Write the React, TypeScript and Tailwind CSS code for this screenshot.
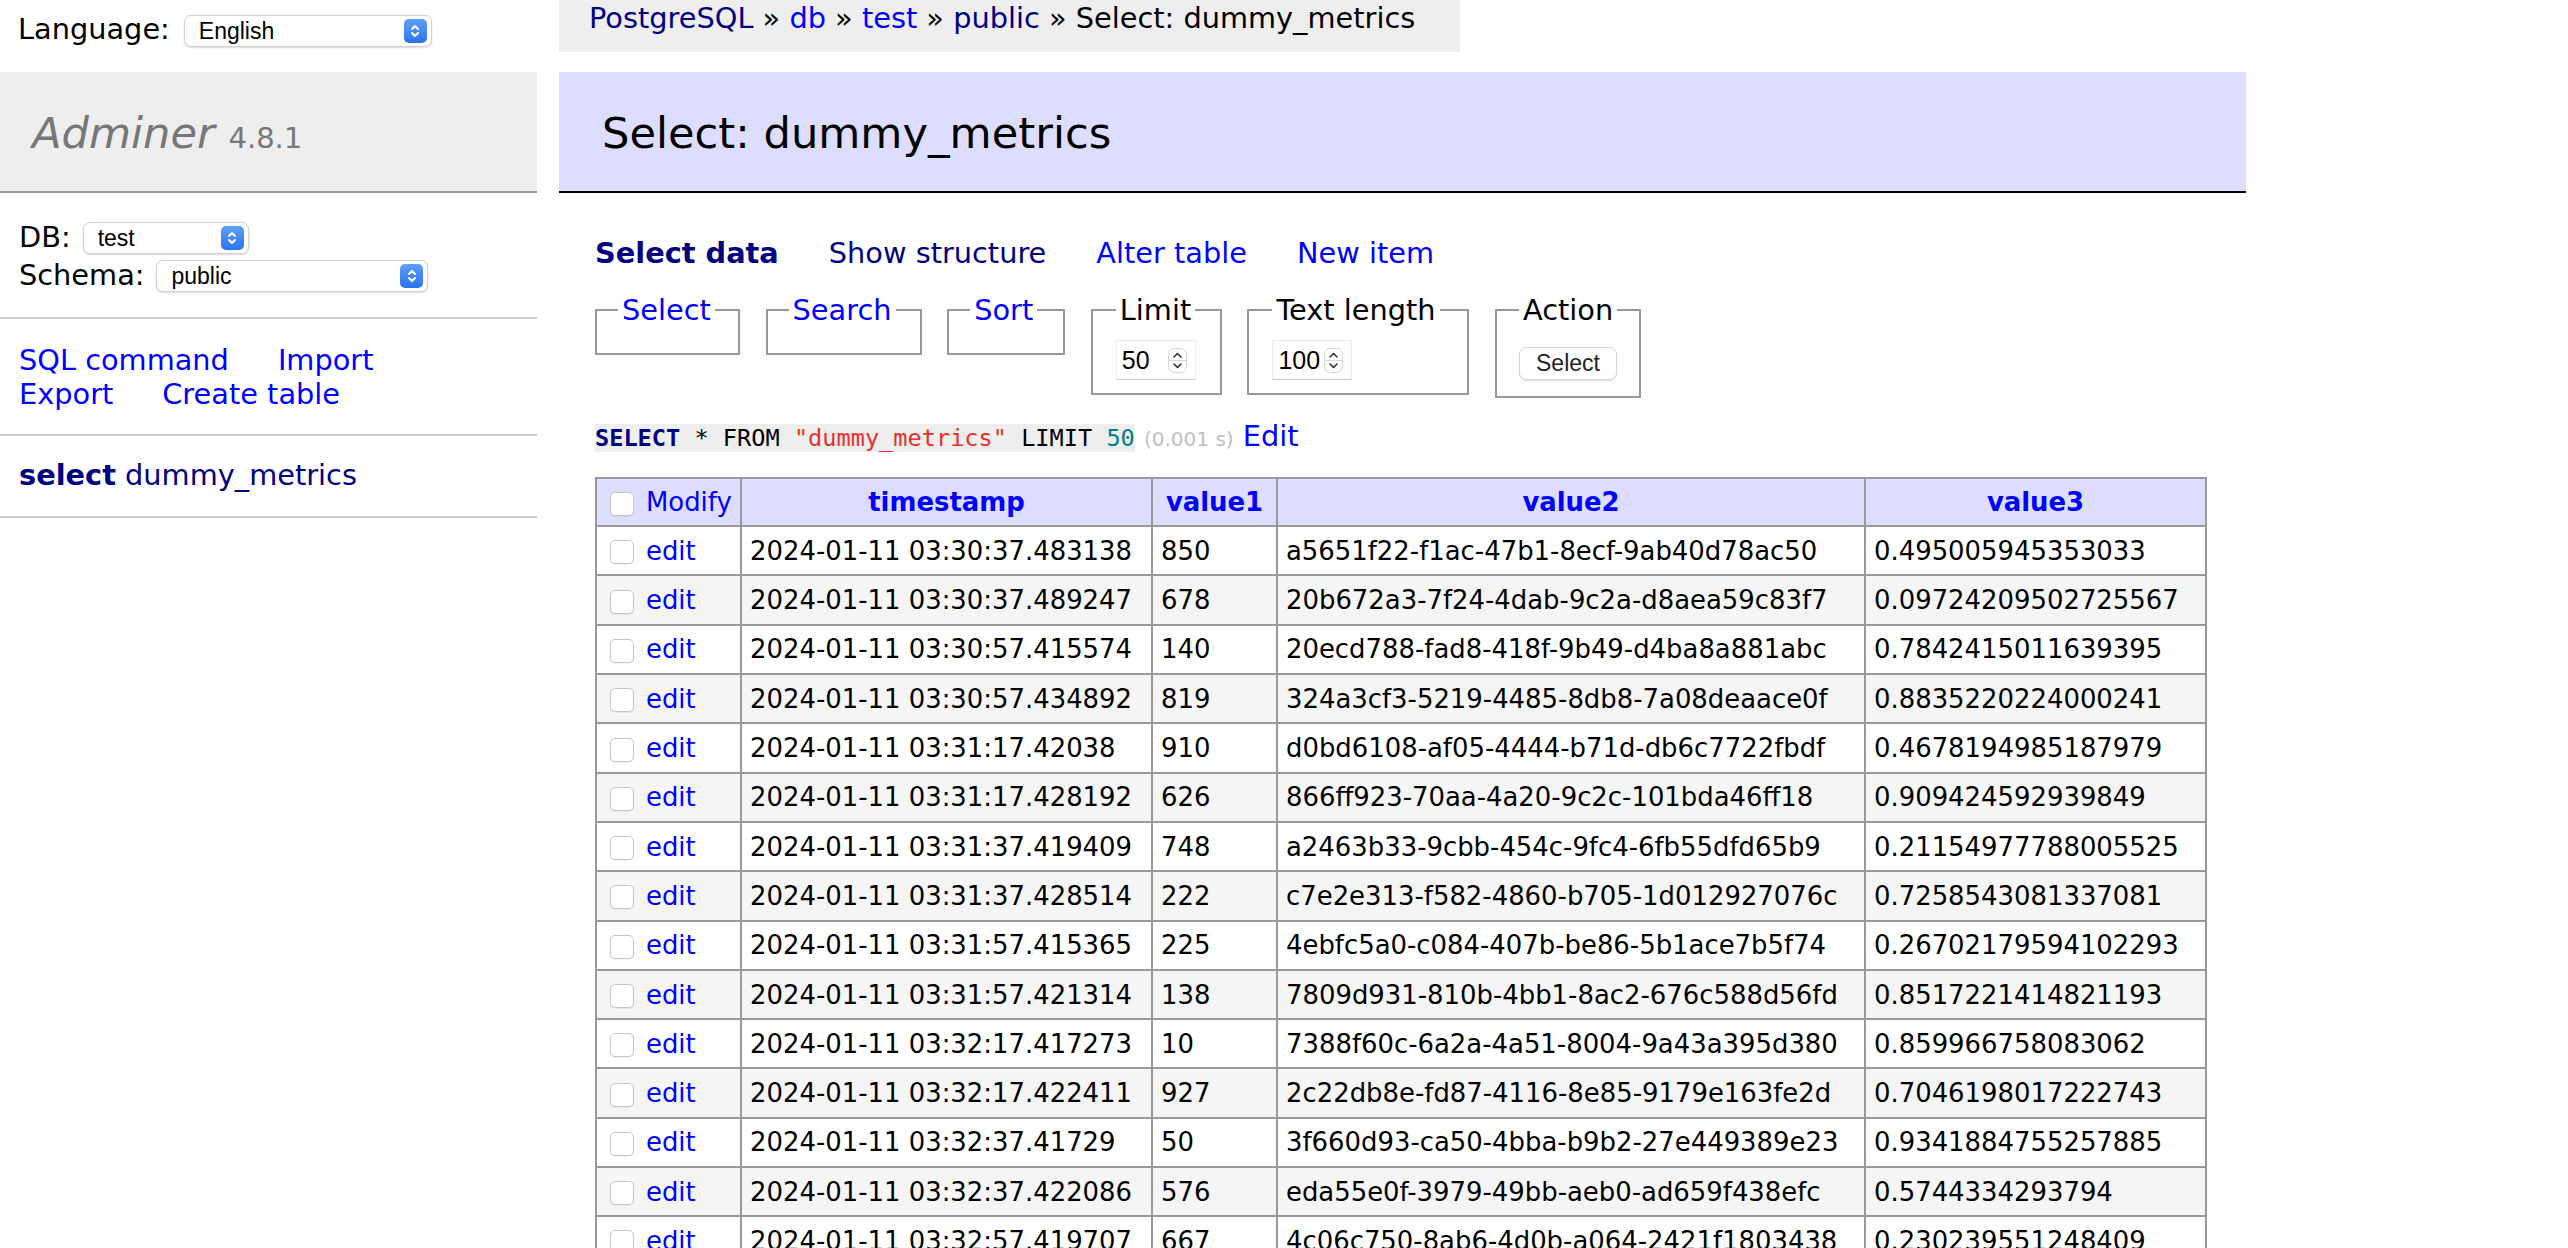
import React from 'react';

const rows = [
  ['2024-01-11 03:30:37.483138', '850', 'a5651f22-f1ac-47b1-8ecf-9ab40d78ac50', '0.495005945353033'],
  ['2024-01-11 03:30:37.489247', '678', '20b672a3-7f24-4dab-9c2a-d8aea59c83f7', '0.09724209502725567'],
  ['2024-01-11 03:30:57.415574', '140', '20ecd788-fad8-418f-9b49-d4ba8a881abc', '0.7842415011639395'],
  ['2024-01-11 03:30:57.434892', '819', '324a3cf3-5219-4485-8db8-7a08deaace0f', '0.8835220224000241'],
  ['2024-01-11 03:31:17.42038', '910', 'd0bd6108-af05-4444-b71d-db6c7722fbdf', '0.4678194985187979'],
  ['2024-01-11 03:31:17.428192', '626', '866ff923-70aa-4a20-9c2c-101bda46ff18', '0.909424592939849'],
  ['2024-01-11 03:31:37.419409', '748', 'a2463b33-9cbb-454c-9fc4-6fb55dfd65b9', '0.21154977788005525'],
  ['2024-01-11 03:31:37.428514', '222', 'c7e2e313-f582-4860-b705-1d012927076c', '0.7258543081337081'],
  ['2024-01-11 03:31:57.415365', '225', '4ebfc5a0-c084-407b-be86-5b1ace7b5f74', '0.26702179594102293'],
  ['2024-01-11 03:31:57.421314', '138', '7809d931-810b-4bb1-8ac2-676c588d56fd', '0.8517221414821193'],
  ['2024-01-11 03:32:17.417273', '10', '7388f60c-6a2a-4a51-8004-9a43a395d380', '0.859966758083062'],
  ['2024-01-11 03:32:17.422411', '927', '2c22db8e-fd87-4116-8e85-9179e163fe2d', '0.7046198017222743'],
  ['2024-01-11 03:32:37.41729', '50', '3f660d93-ca50-4bba-b9b2-27e449389e23', '0.9341884755257885'],
  ['2024-01-11 03:32:37.422086', '576', 'eda55e0f-3979-49bb-aeb0-ad659f438efc', '0.5744334293794'],
  ['2024-01-11 03:32:57.419707', '667', '4c06c750-8ab6-4d0b-a064-2421f1803438', '0.230239551248409'],
];

function SelectBox({ value, className }: { value: string; className: string }) {
  return (
    <div className={`flex h-[32px] items-center justify-between rounded-[7px] border border-[#d2d2d2] bg-white pl-[14px] pr-[4px] shadow-[0_1px_2px_rgba(0,0,0,0.15)] ${className}`}>
      <span className="font-['Liberation_Sans',sans-serif] text-[23px] leading-none text-black">{value}</span>
      <span className="flex h-[24px] w-[23px] items-center justify-center rounded-[5px] bg-linear-to-b from-[#5e9ff9] to-[#2c72ef]">
        <svg width="12" height="18" viewBox="0 0 12 18" fill="none" stroke="white" strokeWidth="2" strokeLinecap="round" strokeLinejoin="round">
          <path d="M3 7l3-3 3 3M3 11l3 3 3-3" />
        </svg>
      </span>
    </div>
  );
}

function NumberBox({ value }: { value: string }) {
  return (
    <div className="flex h-[40px] w-[80px] items-center justify-between border border-[#ececec] border-b-[#c9c9c9] bg-white pl-[5px] pr-[8px]">
      <span className="font-['Liberation_Sans',sans-serif] text-[25px] leading-none text-black">{value}</span>
      <svg width="19" height="25" viewBox="0 0 19 25" fill="none">
        <rect x="0.5" y="0.5" width="18" height="24" rx="6" fill="#fff" stroke="#d3d3d3" />
        <line x1="1" y1="12.5" x2="18" y2="12.5" stroke="#dcdcdc" />
        <path d="M6 9l3.5-3.5L13 9" stroke="#333" strokeWidth="1.6" strokeLinecap="round" strokeLinejoin="round" />
        <path d="M6 16l3.5 3.5L13 16" stroke="#333" strokeWidth="1.6" strokeLinecap="round" strokeLinejoin="round" />
      </svg>
    </div>
  );
}

function Checkbox() {
  return <span className="ml-[5px] mr-[12px] inline-block h-[24px] w-[24px] rounded-[5px] border border-[#c6c6c6] bg-white align-middle shadow-[0_1px_1px_rgba(0,0,0,0.06)]" />;
}

const filters = [
  { name: 'Select', width: 'w-[145px]' },
  { name: 'Search', width: 'w-[156px]' },
  { name: 'Sort', width: 'w-[118px]' },
];

export default function App() {
  const cell = 'border-2 border-[#999] px-[8px] py-0 whitespace-nowrap';
  const box = 'border-2 border-[#999] pb-[13px] pt-[12px]';

  return (
    <div className="flex min-h-screen w-[2568px] bg-white font-['DejaVu_Sans',Verdana,sans-serif] text-[28.8px] text-black">
      <aside className="w-[537px] shrink-0">
        <div className="flex h-[72px] items-start gap-[14px] pl-[18px] pt-[15px]">
          <span className="leading-[28px]">Language:</span>
          <SelectBox value="English" className="w-[248px]" />
        </div>

        <h1 className="h-[121px] border-b-2 border-[#999] bg-[#eee] pl-[32px] pt-[34px] text-[43.2px] font-normal leading-[54px] text-[#777]">
          <span className="italic">Adminer</span> <span className="text-[29px]">4.8.1</span>
        </h1>

        <div className="flex flex-col gap-[6px] border-b-2 border-[#ccc] pb-[25px] pl-[19px] pt-[29px]">
          <div className="flex h-[32px] items-center gap-[12px]">
            <span>DB:</span>
            <SelectBox value="test" className="w-[166px]" />
          </div>
          <div className="flex h-[32px] items-center gap-[12px]">
            <span>Schema:</span>
            <SelectBox value="public" className="w-[272px]" />
          </div>
        </div>

        <div className="border-b-2 border-[#ccc] pb-[23px] pl-[19px] pt-[24px] leading-[34px] text-[#0000ff]">
          <div className="flex gap-[49px]">
            <a>SQL command</a>
            <a>Import</a>
          </div>
          <div className="flex gap-[49px]">
            <a>Export</a>
            <a>Create table</a>
          </div>
        </div>

        <div className="border-b-2 border-[#ccc] pb-[24px] pl-[19px] pt-[22px] leading-[34px] text-[#000080]">
          <a className="font-bold">select</a> <a>dummy_metrics</a>
        </div>
      </aside>

      <main className="ml-[22px] w-[1687px] shrink-0">
        <div className="h-[52px] w-[901px] whitespace-nowrap bg-[#eee] pl-[30px] leading-[36px]">
          <a className="text-[#000080]">PostgreSQL</a> » <a className="text-[#0000ff]">db</a> » <a className="text-[#0000ff]">test</a> » <a className="text-[#000080]">public</a> » Select: dummy_metrics
        </div>

        <h2 className="mt-[20px] h-[121px] border-b-2 border-black bg-[#ddf] pl-[43px] pt-[34px] text-[43.2px] font-normal leading-[54px]">
          Select: dummy_metrics
        </h2>

        <div className="pl-[36px]">
          <div className="mt-[42px] flex gap-[50px] leading-[36px]">
            <a className="font-bold text-[#000080]">Select data</a>
            <a className="text-[#000080]">Show structure</a>
            <a className="text-[#0000ff]">Alter table</a>
            <a className="text-[#0000ff]">New item</a>
          </div>

          <div className="mt-[21px] flex items-start gap-[25.6px]">
            {filters.map(f => (
              <fieldset key={f.name} className={`${box} ${f.width} px-[21px]`}>
                <legend className="px-[4px] leading-[36px] text-[#0000ff]">{f.name}</legend>
              </fieldset>
            ))}
            <fieldset className={`${box} w-[131px] px-[23px]`}>
              <legend className="px-[4px] leading-[36px]">Limit</legend>
              <NumberBox value="50" />
            </fieldset>
            <fieldset className={`${box} w-[222px] px-[23px]`}>
              <legend className="px-[4px] leading-[36px]">Text length</legend>
              <NumberBox value="100" />
            </fieldset>
            <fieldset className={`${box} w-[146px] px-[22px]`}>
              <legend className="px-[4px] leading-[36px]">Action</legend>
              <button className="mt-[3px] h-[33px] w-[98px] rounded-[7px] border border-[#d6d6d6] bg-white font-['Liberation_Sans',sans-serif] text-[23px] leading-none text-[#222] shadow-[0_1px_1px_rgba(0,0,0,0.12)]">
                Select
              </button>
            </fieldset>
          </div>

          <p className="mt-[20px] whitespace-nowrap leading-[36px]">
            <code className="bg-[#eee] font-['DejaVu_Sans_Mono',monospace] text-[23.6px]">
              <span className="font-bold text-[#000080]">SELECT</span> * FROM <span className="text-[#e8302a]">"dummy_metrics"</span> LIMIT <span className="text-[#007f7f]">50</span>
            </code>{' '}
            <span className="text-[20px] text-[#c0c0c0]">(0.001 s)</span> <a className="text-[#0000ff]">Edit</a>
          </p>

          <table className="mt-[20px] table-fixed border-collapse text-[25.9px] leading-[32px]">
            <thead>
              <tr className="h-[48px] bg-[#ddf]">
                <td className={`${cell} w-[145px] text-left`}>
                  <Checkbox />
                  <a className="text-[#0000ff]">Modify</a>
                </td>
                <th className={`${cell} w-[411px] text-center font-bold text-[#0000ff]`}>timestamp</th>
                <th className={`${cell} w-[125px] text-center font-bold text-[#0000ff]`}>value1</th>
                <th className={`${cell} w-[588px] text-center font-bold text-[#0000ff]`}>value2</th>
                <th className={`${cell} w-[341px] text-center font-bold text-[#0000ff]`}>value3</th>
              </tr>
            </thead>
            <tbody>
              {rows.map((r, i) => (
                <tr key={r[0]} className={`h-[49.3px] ${i % 2 === 1 ? 'bg-[#f5f5f5]' : 'bg-white'}`}>
                  <td className={cell}>
                    <Checkbox />
                    <a className="text-[#0000ff]">edit</a>
                  </td>
                  <td className={cell}>{r[0]}</td>
                  <td className={cell}>{r[1]}</td>
                  <td className={cell}>{r[2]}</td>
                  <td className={cell}>{r[3]}</td>
                </tr>
              ))}
            </tbody>
          </table>
        </div>
      </main>
    </div>
  );
}
